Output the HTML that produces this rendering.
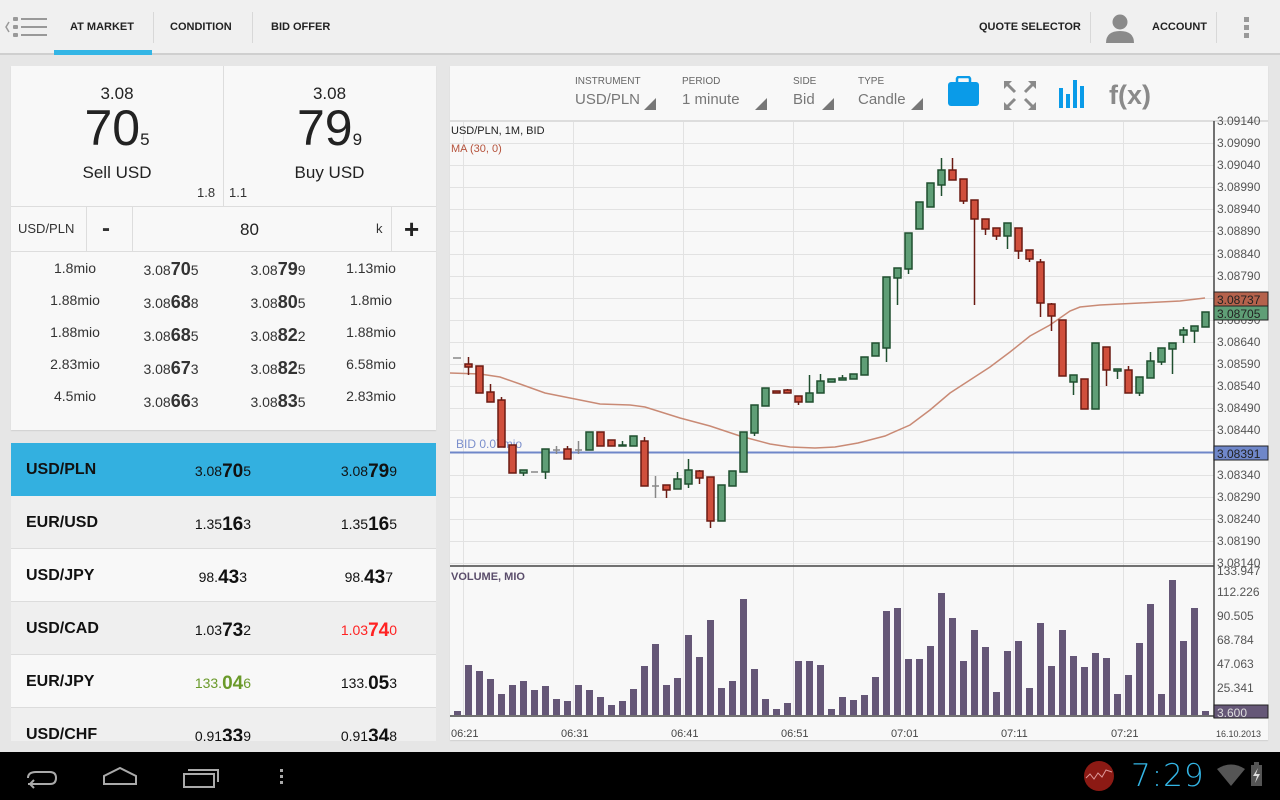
<!DOCTYPE html>
<html><head><meta charset="utf-8">
<style>
*{margin:0;padding:0;box-sizing:border-box}
body{width:1280px;height:800px;overflow:hidden;background:#e6e6e6;font-family:"Liberation Sans",sans-serif;position:relative;color:#222}
.abs{position:absolute}
.nav{left:0;top:0;width:1280px;height:55px;background:#f0f0f0;border-bottom:2px solid #cfcfcf}
.tab{top:0;height:55px;line-height:55px;font-size:11px;font-weight:bold;color:#222}
.sep{width:1px;background:#d8d8d8;top:12px;height:31px}
.card{background:#f8f8f8;box-shadow:0 1px 1px #cfcfcf}
.ctr{text-align:center}
.wl{left:11px;width:425px;height:53px;border-bottom:1px solid #dcdcdc}
.wl .n{position:absolute;left:15px;top:18px;font-size:16px;font-weight:bold;color:#111}
.wl .p{position:absolute;top:17px;font-size:14px;color:#111;text-align:right}
.wl .p b{font-size:19px;position:relative;top:1px}
.bot{left:0;top:752px;width:1280px;height:48px;background:#000}
</style></head><body>

<div class="abs nav"></div>
<svg class="abs" style="left:3px;top:14px" width="46" height="28">
<path d="M6 8 L3 13 L6 18" stroke="#999" stroke-width="1.5" fill="none"/>
<rect x="10" y="3" width="5" height="4" rx="1" fill="#999"/><rect x="10" y="11" width="5" height="4" rx="1" fill="#999"/><rect x="10" y="19" width="5" height="4" rx="1" fill="#999"/>
<rect x="18" y="4" width="26" height="2" fill="#999"/><rect x="18" y="12" width="26" height="2" fill="#999"/><rect x="18" y="20" width="26" height="2" fill="#999"/>
</svg>
<div class="abs tab" style="left:70px">AT MARKET</div>
<div class="abs" style="left:54px;top:50px;width:98px;height:5px;background:#33b5e5"></div>
<div class="abs sep" style="left:153px"></div>
<div class="abs tab" style="left:170px">CONDITION</div>
<div class="abs sep" style="left:252px"></div>
<div class="abs tab" style="left:271px">BID OFFER</div>
<div class="abs tab" style="left:979px">QUOTE SELECTOR</div>
<div class="abs sep" style="left:1090px"></div>
<svg class="abs" style="left:1104px;top:12px" width="32" height="32"><circle cx="16" cy="10" r="7.5" fill="#8a8a8a"/><path d="M2 31 Q2 19 16 19 Q30 19 30 31 Z" fill="#8a8a8a"/></svg>
<div class="abs tab" style="left:1152px">ACCOUNT</div>
<div class="abs sep" style="left:1216px"></div>
<svg class="abs" style="left:1243px;top:16px" width="8" height="24"><rect x="1" y="1" width="5" height="5" fill="#999"/><rect x="1" y="9" width="5" height="5" fill="#999"/><rect x="1" y="17" width="5" height="5" fill="#999"/></svg>

<div class="abs card" style="left:11px;top:66px;width:425px;height:364px"></div>
<div class="abs" style="left:223px;top:66px;width:1px;height:140px;background:#ddd"></div>
<div class="abs ctr" style="left:11px;top:84px;width:212px;font-size:17px">3.08</div>
<div class="abs ctr" style="left:11px;top:100px;width:212px;font-size:50px;line-height:56px">70<span style="font-size:17px">5</span></div>
<div class="abs ctr" style="left:11px;top:163px;width:212px;font-size:17px">Sell USD</div>
<div class="abs ctr" style="left:223px;top:84px;width:213px;font-size:17px">3.08</div>
<div class="abs ctr" style="left:223px;top:100px;width:213px;font-size:50px;line-height:56px">79<span style="font-size:17px">9</span></div>
<div class="abs ctr" style="left:223px;top:163px;width:213px;font-size:17px">Buy USD</div>
<div class="abs" style="left:197px;top:185px;font-size:13px;color:#333">1.8</div>
<div class="abs" style="left:229px;top:185px;font-size:13px;color:#333">1.1</div>
<div class="abs" style="left:11px;top:206px;width:425px;height:1px;background:#ddd"></div>
<div class="abs" style="left:11px;top:251px;width:425px;height:1px;background:#ddd"></div>
<div class="abs" style="left:86px;top:206px;width:1px;height:45px;background:#ddd"></div>
<div class="abs" style="left:132px;top:206px;width:1px;height:45px;background:#ddd"></div>
<div class="abs" style="left:391px;top:206px;width:1px;height:45px;background:#ddd"></div>
<div class="abs" style="left:18px;top:221px;font-size:13px;color:#333">USD/PLN</div>
<div class="abs" style="left:102px;top:215px;font-size:24px;font-weight:bold;color:#333">-</div>
<div class="abs" style="left:240px;top:220px;font-size:17px;color:#222">80</div>
<div class="abs" style="left:376px;top:221px;font-size:13px;color:#333">k</div>
<div class="abs" style="left:404px;top:214px;font-size:26px;font-weight:bold;color:#222">+</div>

<div class="abs" style="left:11px;top:252px;width:425px;font-size:14px;color:#333">
<div style="position:absolute;left:24px;width:80px;text-align:center;line-height:32px">1.8mio<br>1.88mio<br>1.88mio<br>2.83mio<br>4.5mio</div>
<div style="position:absolute;left:120px;width:80px;text-align:center;line-height:32px;top:1px">3.08<b style="font-size:18px">70</b>5<br>3.08<b style="font-size:18px">68</b>8<br>3.08<b style="font-size:18px">68</b>5<br>3.08<b style="font-size:18px">67</b>3<br>3.08<b style="font-size:18px">66</b>3</div>
<div style="position:absolute;left:227px;width:80px;text-align:center;line-height:32px;top:1px">3.08<b style="font-size:18px">79</b>9<br>3.08<b style="font-size:18px">80</b>5<br>3.08<b style="font-size:18px">82</b>2<br>3.08<b style="font-size:18px">82</b>5<br>3.08<b style="font-size:18px">83</b>5</div>
<div style="position:absolute;left:320px;width:80px;text-align:center;line-height:32px">1.13mio<br>1.8mio<br>1.88mio<br>6.58mio<br>2.83mio</div>
</div>

<div class="abs" style="left:11px;top:443px;width:425px;height:298px;overflow:hidden">
<div class="wl" style="position:absolute;left:0;top:0;background:#33b0e0;border:none"><span class="n">USD/PLN</span><span class="p" style="right:185px">3.08<b>70</b>5</span><span class="p" style="right:39px">3.08<b>79</b>9</span></div>
<div class="wl" style="position:absolute;left:0;top:53px;background:#efefef"><span class="n">EUR/USD</span><span class="p" style="right:185px">1.35<b>16</b>3</span><span class="p" style="right:39px">1.35<b>16</b>5</span></div>
<div class="wl" style="position:absolute;left:0;top:106px;background:#f8f8f8"><span class="n">USD/JPY</span><span class="p" style="right:189px">98.<b>43</b>3</span><span class="p" style="right:43px">98.<b>43</b>7</span></div>
<div class="wl" style="position:absolute;left:0;top:159px;background:#efefef"><span class="n">USD/CAD</span><span class="p" style="right:185px">1.03<b>73</b>2</span><span class="p" style="right:39px;color:#f22">1.03<b>74</b>0</span></div>
<div class="wl" style="position:absolute;left:0;top:212px;background:#f8f8f8"><span class="n">EUR/JPY</span><span class="p" style="right:185px;color:#6a9a2a">133.<b>04</b>6</span><span class="p" style="right:39px">133.<b>05</b>3</span></div>
<div class="wl" style="position:absolute;left:0;top:265px;background:#efefef"><span class="n">USD/CHF</span><span class="p" style="right:185px">0.91<b>33</b>9</span><span class="p" style="right:39px">0.91<b>34</b>8</span></div>
</div>

<div class="abs card" style="left:450px;top:66px;width:818px;height:674px"></div>
<div class="abs" style="left:575px;top:76px;font-size:10px;color:#666">INSTRUMENT</div>
<div class="abs" style="left:575px;top:91px;font-size:15px;color:#777">USD/PLN</div>
<div class="abs" style="left:682px;top:76px;font-size:10px;color:#666">PERIOD</div>
<div class="abs" style="left:682px;top:91px;font-size:15px;color:#777">1 minute</div>
<div class="abs" style="left:793px;top:76px;font-size:10px;color:#666">SIDE</div>
<div class="abs" style="left:793px;top:91px;font-size:15px;color:#777">Bid</div>
<div class="abs" style="left:858px;top:76px;font-size:10px;color:#666">TYPE</div>
<div class="abs" style="left:858px;top:91px;font-size:15px;color:#777">Candle</div>
<svg class="abs" style="left:640px;top:90px" width="500" height="30">
<path d="M4 20 L16 8 L16 20Z" fill="#777"/><path d="M115 20 L127 8 L127 20Z" fill="#777"/><path d="M182 20 L194 8 L194 20Z" fill="#777"/><path d="M271 20 L283 8 L283 20Z" fill="#777"/>
</svg>
<svg class="abs" style="left:946px;top:76px" width="210" height="36">
<rect x="2" y="6" width="31" height="24" rx="3" fill="#0a9be8"/><rect x="11" y="1" width="13" height="7" rx="2" fill="none" stroke="#0a9be8" stroke-width="2.5"/>
<g stroke="#8a8a8a" stroke-width="3"><path d="M61 8 L69 16 M87 8 L79 16 M61 31 L69 23 M87 31 L79 23" fill="none"/></g>
<path d="M58 5 L66 5 L58 13Z M90 5 L82 5 L90 13Z M58 34 L66 34 L58 26Z M90 34 L82 34 L90 26Z" fill="#8a8a8a"/>
<rect x="113" y="12" width="4" height="20" fill="#0a9be8"/><rect x="120" y="18" width="4" height="14" fill="#0a9be8"/><rect x="127" y="4" width="4" height="28" fill="#0a9be8"/><rect x="134" y="10" width="4" height="22" fill="#0a9be8"/>
<text x="163" y="28" font-size="27" font-weight="bold" fill="#8a8a8a" font-family="Liberation Sans">f(x)</text>
</svg>

<svg class="abs" style="left:0;top:0" width="1280" height="750">
<line x1="450" y1="121" x2="1268" y2="121" stroke="#ddd" stroke-width="2"/>
<g stroke="#e2e2e2" stroke-width="1">
<line x1="463.5" y1="122" x2="463.5" y2="716"/><line x1="573.5" y1="122" x2="573.5" y2="716"/><line x1="683.5" y1="122" x2="683.5" y2="716"/><line x1="793.5" y1="122" x2="793.5" y2="716"/><line x1="903.5" y1="122" x2="903.5" y2="716"/><line x1="1013.5" y1="122" x2="1013.5" y2="716"/><line x1="1123.5" y1="122" x2="1123.5" y2="716"/>
<line x1="450" y1="143.5" x2="1214" y2="143.5"/><line x1="450" y1="165.5" x2="1214" y2="165.5"/><line x1="450" y1="187.5" x2="1214" y2="187.5"/><line x1="450" y1="209.5" x2="1214" y2="209.5"/><line x1="450" y1="231.5" x2="1214" y2="231.5"/><line x1="450" y1="254.5" x2="1214" y2="254.5"/><line x1="450" y1="276.5" x2="1214" y2="276.5"/><line x1="450" y1="298.5" x2="1214" y2="298.5"/><line x1="450" y1="320.5" x2="1214" y2="320.5"/><line x1="450" y1="342.5" x2="1214" y2="342.5"/><line x1="450" y1="364.5" x2="1214" y2="364.5"/><line x1="450" y1="386.5" x2="1214" y2="386.5"/><line x1="450" y1="408.5" x2="1214" y2="408.5"/><line x1="450" y1="430.5" x2="1214" y2="430.5"/><line x1="450" y1="475.5" x2="1214" y2="475.5"/><line x1="450" y1="497.5" x2="1214" y2="497.5"/><line x1="450" y1="519.5" x2="1214" y2="519.5"/><line x1="450" y1="541.5" x2="1214" y2="541.5"/><line x1="450" y1="563.5" x2="1214" y2="563.5"/>
</g>
<line x1="450" y1="566" x2="1214" y2="566" stroke="#444" stroke-width="1.5"/>
<line x1="450" y1="716" x2="1214" y2="716" stroke="#444" stroke-width="1.5"/>
<line x1="1214" y1="121" x2="1214" y2="718" stroke="#444" stroke-width="1.5"/>
<polyline fill="none" stroke="#c98a75" stroke-width="1.5" points="450,373 480,374 500,377 520,384 545,393 575,399 600,404 630,405 645,407 680,418 710,426 740,436 770,444 790,447 815,448 835,447 858,443 885,436 910,425 930,410 950,393 970,380 990,367 1010,352 1030,336 1050,325 1070,311 1080,307 1100,305 1140,303 1180,301 1205,298"/>
<line x1="450" y1="452.5" x2="1214" y2="452.5" stroke="#6f87c9" stroke-width="2"/>
<text x="456" y="448" font-size="12" fill="#7b8fcc" font-family="Liberation Sans">BID 0.07mio</text>
<text x="451" y="134" font-size="11" fill="#222" font-family="Liberation Sans">USD/PLN, 1M, BID</text>
<text x="451" y="152" font-size="11" fill="#b5523b" font-family="Liberation Sans">MA (30, 0)</text>
<g stroke-width="1.5">
<g stroke="#888"><line x1="453" y1="358" x2="461" y2="358"/><line x1="524" y1="472" x2="531" y2="472" transform="translate(7,0)"/><line x1="553" y1="450" x2="560" y2="450"/><line x1="556.5" y1="446" x2="556.5" y2="454"/><line x1="575" y1="450" x2="582" y2="450"/><line x1="578.5" y1="441" x2="578.5" y2="454"/><line x1="652" y1="486" x2="659" y2="486"/><line x1="655.5" y1="476" x2="655.5" y2="498"/></g>
<g stroke="#6b1a12" fill="#d04f3c">
<line x1="468.5" y1="357" x2="468.5" y2="375"/><rect x="465" y="364" width="7" height="3"/>
<rect x="476" y="366" width="7" height="27"/>
<line x1="490.5" y1="384" x2="490.5" y2="392"/><rect x="487" y="392" width="7" height="10"/>
<line x1="501.5" y1="397" x2="501.5" y2="400"/><rect x="498" y="400" width="7" height="47"/>
<rect x="509" y="445" width="7" height="28"/>
<line x1="567.5" y1="446" x2="567.5" y2="449"/><rect x="564" y="449" width="7" height="10"/>
<rect x="597" y="432" width="7" height="14"/>
<rect x="608" y="440" width="7" height="6"/>
<line x1="644.5" y1="437" x2="644.5" y2="441"/><rect x="641" y="441" width="7" height="45"/>
<line x1="666.5" y1="490" x2="666.5" y2="498"/><rect x="663" y="485" width="7" height="5"/>
<line x1="699.5" y1="470" x2="699.5" y2="484"/><rect x="696" y="471" width="7" height="7"/>
<line x1="710.5" y1="521" x2="710.5" y2="528"/><rect x="707" y="477" width="7" height="44"/>
<rect x="773" y="391" width="7" height="2"/>
<line x1="787.5" y1="389" x2="787.5" y2="391"/><rect x="784" y="390" width="7" height="3"/>
<line x1="798.5" y1="402" x2="798.5" y2="405"/><rect x="795" y="396" width="7" height="6"/>
<line x1="952.5" y1="158" x2="952.5" y2="170"/><rect x="949" y="170" width="7" height="10"/>
<line x1="963.5" y1="201" x2="963.5" y2="204"/><rect x="960" y="179" width="7" height="22"/>
<line x1="974.5" y1="219" x2="974.5" y2="305"/><rect x="971" y="200" width="7" height="19"/>
<line x1="985.5" y1="229" x2="985.5" y2="235"/><rect x="982" y="219" width="7" height="10"/>
<line x1="996.5" y1="236" x2="996.5" y2="240"/><rect x="993" y="228" width="7" height="8"/>
<line x1="1018.5" y1="251" x2="1018.5" y2="259"/><rect x="1015" y="228" width="7" height="23"/>
<line x1="1029.5" y1="259" x2="1029.5" y2="262"/><rect x="1026" y="250" width="7" height="9"/>
<line x1="1040.5" y1="259" x2="1040.5" y2="317"/><rect x="1037" y="262" width="7" height="41"/>
<line x1="1051.5" y1="303" x2="1051.5" y2="331"/><rect x="1048" y="304" width="7" height="12"/>
<rect x="1059" y="320" width="7" height="56"/>
<rect x="1081" y="379" width="7" height="30"/>
<line x1="1106.5" y1="370" x2="1106.5" y2="386"/><rect x="1103" y="347" width="7" height="23"/>
<line x1="1128.5" y1="366" x2="1128.5" y2="370"/><rect x="1125" y="370" width="7" height="23"/>
</g>
<g stroke="#1f4f2f" fill="#5f9e76">
<line x1="523.5" y1="473" x2="523.5" y2="476"/><rect x="520" y="470" width="7" height="3"/>
<line x1="545.5" y1="472" x2="545.5" y2="479"/><rect x="542" y="449" width="7" height="23"/>
<rect x="586" y="432" width="7" height="18"/>
<line x1="622.5" y1="441" x2="622.5" y2="445"/><rect x="619" y="445" width="7" height="1"/>
<rect x="630" y="436" width="7" height="10"/>
<line x1="677.5" y1="472" x2="677.5" y2="479"/><rect x="674" y="479" width="7" height="10"/>
<line x1="688.5" y1="459" x2="688.5" y2="488"/><rect x="685" y="470" width="7" height="14"/>
<rect x="718" y="485" width="7" height="36"/>
<rect x="729" y="471" width="7" height="15"/>
<rect x="740" y="432" width="7" height="40"/>
<line x1="754.5" y1="433" x2="754.5" y2="436"/><rect x="751" y="405" width="7" height="28"/>
<rect x="762" y="388" width="7" height="18"/>
<line x1="809.5" y1="375" x2="809.5" y2="393"/><rect x="806" y="393" width="7" height="9"/>
<line x1="820.5" y1="374" x2="820.5" y2="381"/><rect x="817" y="381" width="7" height="12"/>
<rect x="828" y="379" width="7" height="3"/>
<line x1="842.5" y1="375" x2="842.5" y2="378"/><rect x="839" y="378" width="7" height="2"/>
<rect x="850" y="374" width="7" height="5"/>
<rect x="861" y="357" width="7" height="18"/>
<rect x="872" y="343" width="7" height="13"/>
<line x1="886.5" y1="348" x2="886.5" y2="362"/><rect x="883" y="277" width="7" height="71"/>
<line x1="897.5" y1="278" x2="897.5" y2="305"/><rect x="894" y="268" width="7" height="10"/>
<line x1="908.5" y1="269" x2="908.5" y2="274"/><rect x="905" y="233" width="7" height="36"/>
<rect x="916" y="202" width="7" height="27"/>
<rect x="927" y="183" width="7" height="24"/>
<line x1="941.5" y1="158" x2="941.5" y2="196"/><rect x="938" y="170" width="7" height="15"/>
<line x1="1007.5" y1="236" x2="1007.5" y2="249"/><rect x="1004" y="223" width="7" height="13"/>
<line x1="1073.5" y1="382" x2="1073.5" y2="395"/><rect x="1070" y="375" width="7" height="7"/>
<rect x="1092" y="343" width="7" height="66"/>
<line x1="1117.5" y1="371" x2="1117.5" y2="379"/><rect x="1114" y="369" width="7" height="2"/>
<line x1="1139.5" y1="393" x2="1139.5" y2="396"/><rect x="1136" y="377" width="7" height="16"/>
<line x1="1150.5" y1="352" x2="1150.5" y2="361"/><rect x="1147" y="361" width="7" height="17"/>
<line x1="1161.5" y1="362" x2="1161.5" y2="365"/><rect x="1158" y="348" width="7" height="14"/>
<line x1="1172.5" y1="349" x2="1172.5" y2="374"/><rect x="1169" y="343" width="7" height="6"/>
<line x1="1183.5" y1="327" x2="1183.5" y2="343"/><rect x="1180" y="330" width="7" height="5"/>
<line x1="1194.5" y1="331" x2="1194.5" y2="343"/><rect x="1191" y="326" width="7" height="5"/>
<rect x="1202" y="312" width="7" height="15"/>
</g></g>
<text x="451" y="580" font-size="11" fill="#5a4d6b" font-family="Liberation Sans" font-weight="bold">VOLUME, MIO</text>
<g fill="#655777">
<rect x="454" y="711" width="7" height="4"/><rect x="465" y="665" width="7" height="50"/><rect x="476" y="671" width="7" height="44"/><rect x="487" y="679" width="7" height="36"/><rect x="498" y="694" width="7" height="21"/><rect x="509" y="685" width="7" height="30"/><rect x="520" y="681" width="7" height="34"/><rect x="531" y="690" width="7" height="25"/><rect x="542" y="686" width="7" height="29"/><rect x="553" y="699" width="7" height="16"/><rect x="564" y="701" width="7" height="14"/><rect x="575" y="685" width="7" height="30"/><rect x="586" y="690" width="7" height="25"/><rect x="597" y="697" width="7" height="18"/><rect x="608" y="705" width="7" height="10"/><rect x="619" y="701" width="7" height="14"/><rect x="630" y="689" width="7" height="26"/><rect x="641" y="666" width="7" height="49"/><rect x="652" y="644" width="7" height="71"/><rect x="663" y="685" width="7" height="30"/><rect x="674" y="678" width="7" height="37"/><rect x="685" y="635" width="7" height="80"/><rect x="696" y="657" width="7" height="58"/><rect x="707" y="620" width="7" height="95"/><rect x="718" y="688" width="7" height="27"/><rect x="729" y="681" width="7" height="34"/><rect x="740" y="599" width="7" height="116"/><rect x="751" y="669" width="7" height="46"/><rect x="762" y="699" width="7" height="16"/><rect x="773" y="709" width="7" height="6"/><rect x="784" y="703" width="7" height="12"/><rect x="795" y="661" width="7" height="54"/><rect x="806" y="661" width="7" height="54"/><rect x="817" y="665" width="7" height="50"/><rect x="828" y="709" width="7" height="6"/><rect x="839" y="697" width="7" height="18"/><rect x="850" y="700" width="7" height="15"/><rect x="861" y="695" width="7" height="20"/><rect x="872" y="677" width="7" height="38"/><rect x="883" y="611" width="7" height="104"/><rect x="894" y="608" width="7" height="107"/><rect x="905" y="659" width="7" height="56"/><rect x="916" y="659" width="7" height="56"/><rect x="927" y="646" width="7" height="69"/><rect x="938" y="593" width="7" height="122"/><rect x="949" y="618" width="7" height="97"/><rect x="960" y="661" width="7" height="54"/><rect x="971" y="630" width="7" height="85"/><rect x="982" y="647" width="7" height="68"/><rect x="993" y="692" width="7" height="23"/><rect x="1004" y="651" width="7" height="64"/><rect x="1015" y="641" width="7" height="74"/><rect x="1026" y="688" width="7" height="27"/><rect x="1037" y="623" width="7" height="92"/><rect x="1048" y="666" width="7" height="49"/><rect x="1059" y="630" width="7" height="85"/><rect x="1070" y="656" width="7" height="59"/><rect x="1081" y="667" width="7" height="48"/><rect x="1092" y="653" width="7" height="62"/><rect x="1103" y="658" width="7" height="57"/><rect x="1114" y="694" width="7" height="21"/><rect x="1125" y="675" width="7" height="40"/><rect x="1136" y="643" width="7" height="72"/><rect x="1147" y="604" width="7" height="111"/><rect x="1158" y="694" width="7" height="21"/><rect x="1169" y="580" width="7" height="135"/><rect x="1180" y="641" width="7" height="74"/><rect x="1191" y="608" width="7" height="107"/><rect x="1202" y="711" width="7" height="4"/>
</g>
<g font-size="12" fill="#555" font-family="Liberation Sans">
<text x="1217" y="125">3.09140</text><text x="1217" y="147">3.09090</text><text x="1217" y="169">3.09040</text><text x="1217" y="191">3.08990</text><text x="1217" y="213">3.08940</text><text x="1217" y="235">3.08890</text><text x="1217" y="258">3.08840</text><text x="1217" y="280">3.08790</text><text x="1217" y="324">3.08690</text><text x="1217" y="346">3.08640</text><text x="1217" y="368">3.08590</text><text x="1217" y="390">3.08540</text><text x="1217" y="412">3.08490</text><text x="1217" y="434">3.08440</text><text x="1217" y="479">3.08340</text><text x="1217" y="501">3.08290</text><text x="1217" y="523">3.08240</text><text x="1217" y="545">3.08190</text><text x="1217" y="567">3.08140</text>
<text x="1217" y="575">133.947</text><text x="1217" y="596">112.226</text><text x="1217" y="620">90.505</text><text x="1217" y="644">68.784</text><text x="1217" y="668">47.063</text><text x="1217" y="692">25.341</text>
</g>
<rect x="1214" y="292" width="54" height="14" fill="#b5624c" stroke="#222"/><text x="1217" y="304" font-size="12" fill="#222" font-family="Liberation Sans">3.08737</text>
<rect x="1214" y="306" width="54" height="14" fill="#5f9e76" stroke="#222"/><text x="1217" y="318" font-size="12" fill="#222" font-family="Liberation Sans">3.08705</text>
<rect x="1214" y="446" width="54" height="14" fill="#6f87c9" stroke="#222"/><text x="1217" y="458" font-size="12" fill="#222" font-family="Liberation Sans">3.08391</text>
<rect x="1214" y="705" width="54" height="13" fill="#655777" stroke="#222"/><text x="1217" y="717" font-size="12" fill="#ddd" font-family="Liberation Sans">3.600</text>
<g font-size="11" fill="#444" font-family="Liberation Sans">
<text x="451" y="737">06:21</text><text x="561" y="737">06:31</text><text x="671" y="737">06:41</text><text x="781" y="737">06:51</text><text x="891" y="737">07:01</text><text x="1001" y="737">07:11</text><text x="1111" y="737">07:21</text>
<text x="1216" y="737" font-size="9">16.10.2013</text></g>
</svg>

<div class="abs bot"></div>
<svg class="abs" style="left:0;top:752px" width="1280" height="48">
<path d="M28 26 Q28 20 36 20 L50 20 Q56 20 56 26 Q56 32 50 32 L28 32 M30 32 L34 28 M30 32 L34 36" stroke="#aaa" stroke-width="2" fill="none"/>
<path d="M104 32 L104 24 L120 16 L136 24 L136 32 Z" stroke="#aaa" stroke-width="2" fill="none"/>
<rect x="184" y="22" width="30" height="13" stroke="#aaa" stroke-width="2" fill="none"/><path d="M188 18 L218 18 L218 30" stroke="#aaa" stroke-width="2" fill="none"/>
<rect x="280" y="17" width="3" height="3" fill="#aaa"/><rect x="280" y="23" width="3" height="3" fill="#aaa"/><rect x="280" y="29" width="3" height="3" fill="#aaa"/>
<circle cx="1099" cy="24" r="15" fill="#8c1a14"/><path d="M1086 26 L1090 22 L1094 27 L1098 21 L1102 25 L1106 18 L1112 20" stroke="#d99" stroke-width="1" fill="none"/>
<text x="1131" y="34" font-size="31" fill="#33b5e5" font-family="DejaVu Sans" font-weight="100" letter-spacing="1">7:29</text>
<path d="M1217 17 Q1231 8 1245 17 L1231 34 Z" fill="#555"/>
<rect x="1251" y="13" width="11" height="21" fill="#555"/><rect x="1254" y="10" width="5" height="3" fill="#555"/><path d="M1258 16 L1253 24 L1257 24 L1255 31 L1260 22 L1256 22Z" fill="#ddd"/>
</svg>
</body></html>
